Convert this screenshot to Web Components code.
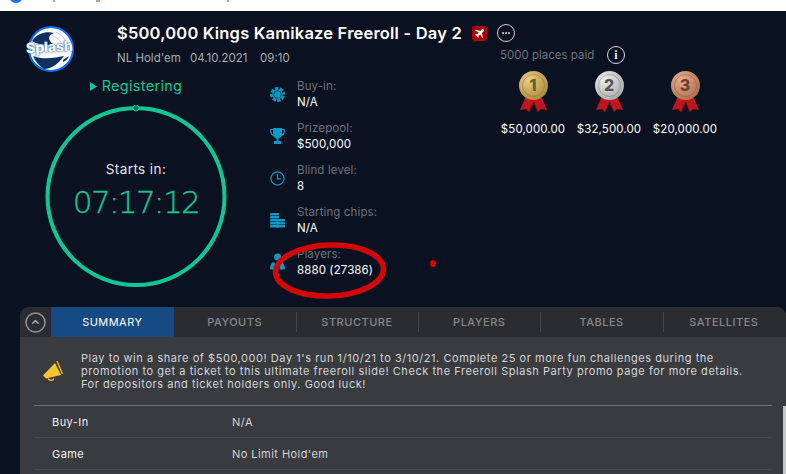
<!DOCTYPE html>
<html>
<head>
<meta charset="utf-8">
<style>
  html, body { margin: 0; padding: 0; height: 100%; overflow: hidden; background: #0a1120; }
  body { font-family: "Inter", "Noto Sans", sans-serif; }
</style>
</head>
<body>
<tourney-page></tourney-page>

<script>
// each block of the page is its own element
const FONT = '"Inter", "Noto Sans", sans-serif';

class TopStrip extends HTMLElement {
  constructor() {
    super();
    this.attachShadow({ mode: 'open' }).innerHTML = `
      <style>
        :host { display: block; height: 11px; background: #fff; overflow: hidden; position: relative; }
        .dot { position: absolute; left: 9px; top: -11px; width: 14px; height: 14px; border-radius: 50%; background: #1a73e8; }
        i { position: absolute; top: 0; height: 2px; width: 2px; background: #b9a79a; }
      </style>
      <div class="dot"></div>
      <i style="left:53px"></i><i style="left:96px;width:4px"></i><i style="left:227px"></i>`;
  }
}

class SplashLogo extends HTMLElement {
  constructor() {
    super();
    this.attachShadow({ mode: 'open' }).innerHTML = `
      <style>
        :host { display: block; width: 50px; height: 50px; position: relative; }
        svg { position: absolute; left: 0; top: 0; }
        span { position: absolute; left: -1px; top: 13px; font: 800 14.300px/18px ${FONT}; color: #fff; letter-spacing: -.3px; text-shadow: 0 0 2px #1d4e9a, 0 0 1px #1d4e9a; transform: rotate(-3deg); }
      </style>
      <svg width="50" height="50" viewBox="0 0 50 50">
        <circle cx="24" cy="24" r="22" fill="#fff" stroke="#0b6ff0" stroke-width="2"/>
        <path d="M5 16C10 8 20 6 27 8C21 10 20 15 27 20C20 20 10 20 5 16Z" fill="#12305f"/>
        <path d="M6 31C16 35 28 33 37 31C32 38 25 44 17 44C12 41 8 36 6 31Z" fill="#12305f"/>
        <path d="M36 35C38 33 41 32 42 31C41 34 39 36 36 37Z" fill="#12305f"/>
        <path d="M28 7C37 10 42 18 38 27M26 11C32 13 36 18 35 24" fill="none" stroke="#c9d2de" stroke-width="1"/>
      </svg>
      <span>Splash</span>`;
  }
}

class TitleBlock extends HTMLElement {
  constructor() {
    super();
    this.attachShadow({ mode: 'open' }).innerHTML = `
      <style>
        :host { display: block; color: #fff; }
        .line { display: flex; align-items: center; height: 24px; }
        h1 { margin: 0; font: 600 16.500px/24px ${FONT}; letter-spacing: .2px; white-space: nowrap; width: 345px; }
        .plane { width: 15px; height: 15px; border-radius: 3px; background: #a90606; margin-left: 10px; display: flex; align-items: center; justify-content: center; }
        .more { width: 16px; height: 16px; border: 1px solid #c9ccd2; border-radius: 50%; margin-left: 10px; display: flex; align-items: center; justify-content: center; gap: 1px; }
        .more i { width: 2px; height: 2px; border-radius: 50%; background: #d8dade; }
        .sub { display: flex; margin-top: 5px; font: 400 11.500px/16px ${FONT}; color: #a9adb5; }
        .sub span:nth-child(1) { width: 73px; }
        .sub span:nth-child(2) { width: 70px; }
      </style>
      <div class="line">
        <h1><slot></slot></h1>
        <div class="plane">
          <svg width="11" height="11" viewBox="0 0 24 24"><path fill="#fff" d="M21 3c-1-1-3-1-4 .3l-3.500 3.500L4 4 2.500 5.500l8 4.500-3.800 3.800-3-.5L2.500 15l4 2.500L9 21.500l1.200-1.200-.5-3 3.800-3.800 4.500 8L19.500 21 17 11l3.700-3.600C22 6.300 22 4 21 3z"/></svg>
        </div>
        <div class="more"><i></i><i></i><i></i></div>
      </div>
      <div class="sub"><span>NL Hold'em</span><span>04.10.2021</span><span>09:10</span></div>`;
  }
}

class CountdownRing extends HTMLElement {
  constructor() {
    super();
    this.attachShadow({ mode: 'open' }).innerHTML = `
      <style>
        :host { display: block; width: 182px; color: #fff; }
        .status { display: flex; align-items: center; justify-content: center; gap: 5px; height: 18px; color: #0ec795; font: 400 14.500px/18px ${FONT}; letter-spacing: .3px; }
        .status svg { display: block; }
        .ring { width: 182px; height: 182px; margin-top: 10px; position: relative; display: flex; flex-direction: column; align-items: center; }
        .ring svg { position: absolute; left: 0; top: 0; }
        .lbl { margin-top: 55px; font: 400 13.500px/18px ${FONT}; letter-spacing: .4px; color: #e4e6ea; position: relative; }
        .time { margin-top: 4px; font: 200 31px/40px "DejaVu Sans", sans-serif; letter-spacing: -1.600px; -webkit-text-stroke: .35px #0ec795; color: #0ec795; position: relative; white-space: nowrap; }
      </style>
      <div class="status">
        <svg width="7" height="9" viewBox="0 0 7 9"><path d="M0 0L7 4.500L0 9Z" fill="#0ec795"/></svg>
        <span>Registering</span>
      </div>
      <div class="ring">
        <svg width="182" height="182" viewBox="0 0 182 182">
          <circle cx="91" cy="91.500" r="88.500" fill="none" stroke="#0ec795" stroke-width="4"/>
          <circle cx="91" cy="3" r="3" fill="#1e6e5c" stroke="#0ec795" stroke-width="1"/>
        </svg>
        <div class="lbl">Starts in:</div>
        <div class="time">07:17:12</div>
      </div>`;
  }
}

class StatRow extends HTMLElement {
  constructor() {
    super();
    this.attachShadow({ mode: 'open' }).innerHTML = `
      <style>
        :host { display: flex; align-items: center; height: 42px; }
        .ic { width: 15px; height: 18px; margin-right: 12px; flex: none; display: flex; align-items: center; justify-content: center; }
        .lb { font: 400 11.500px/15px ${FONT}; letter-spacing: .12px; color: #6f737b; }
        .val { font: 400 11.500px/16px ${FONT}; letter-spacing: .1px; color: #fff; white-space: nowrap; }
      </style>
      <div class="ic"><slot name="icon"></slot></div>
      <div>
        <div class="lb">${this.getAttribute('label')}</div>
        <div class="val">${this.getAttribute('value')}</div>
      </div>`;
  }
}

class MedalItem extends HTMLElement {
  constructor() {
    super();
    const n = this.getAttribute('place');
    const c = {
      1: ['#e8cf88', '#a98436', '#6f5a22'],
      2: ['#efefef', '#a5a5a5', '#555'],
      3: ['#e6ad92', '#ad6c4c', '#6d3f2b'],
    }[n];
    this.attachShadow({ mode: 'open' }).innerHTML = `
      <style>
        :host { display: flex; flex-direction: column; align-items: center; width: 76px; color: #fff; }
        .m { width: 29px; height: 42px; position: relative; }
        .m svg { position: absolute; left: 0; top: 0; }
        .n { position: absolute; left: 0; right: 0; top: 3px; text-align: center; font: 800 16px/22px ${FONT}; color: ${c[2]}; }
        .p { margin-top: 8px; font: 400 11.500px/16px ${FONT}; letter-spacing: .1px; white-space: nowrap; }
      </style>
      <div class="m">
        <svg width="29" height="42" viewBox="0 0 29 42">
          <path d="M7 25L1 39L7 38L10 41L14.500 31L19 41L22 38L28 39L22 25Z" fill="#c0151f"/>
          <path d="M14.500 31L10 41M14.500 31L19 41" stroke="#7c0d14" stroke-width="1"/>
          <defs><radialGradient id="g" cx=".35" cy=".3" r=".8"><stop offset="0" stop-color="${c[0]}"/><stop offset="1" stop-color="${c[1]}"/></radialGradient></defs>
          <circle cx="14.500" cy="14.500" r="14.500" fill="url(#g)"/>
          <circle cx="14.500" cy="14.500" r="11" fill="none" stroke="${c[2]}" stroke-opacity=".35"/>
        </svg>
        <div class="n">${n}</div>
      </div>
      <div class="p"><slot></slot></div>`;
  }
}

class PayoutBox extends HTMLElement {
  constructor() {
    super();
    this.attachShadow({ mode: 'open' }).innerHTML = `
      <style>
        :host { display: block; width: 238px; }
        .head { display: flex; align-items: center; height: 18px; padding-left: 8px; font: 400 11.500px/18px ${FONT}; color: #6f737b; }
        .info { width: 16px; height: 16px; border: 1px solid #d6d8dc; border-radius: 50%; margin-left: 10px; color: #e8e8e8; font: 700 12px/16px "Liberation Serif", serif; text-align: center; }
        .row { display: flex; margin: 7px 0 0 3px; }
      </style>
      <div class="head"><span style="width:97px;white-space:nowrap">5000 places paid</span><div class="info">i</div></div>
      <div class="row"><slot></slot></div>`;
  }
}

class TabBar extends HTMLElement {
  constructor() {
    super();
    const names = ['SUMMARY', 'PAYOUTS', 'STRUCTURE', 'PLAYERS', 'TABLES', 'SATELLITES'];
    this.attachShadow({ mode: 'open' }).innerHTML = `
      <style>
        :host { display: flex; height: 30px; background: #2b2c2f; border-radius: 9px 9px 0 0; overflow: hidden; }
        .tog { width: 31px; flex: none; display: flex; align-items: center; justify-content: center; }
        .tabs { flex: 1; display: grid; grid-template-columns: 122.500px repeat(5, 122.300px); }
        .t { display: flex; align-items: center; justify-content: center; font: 500 11px/14px ${FONT}; letter-spacing: .5px; color: #85888d; position: relative; }
        .t + .t::before { content: ""; position: absolute; left: 0; top: 5px; bottom: 5px; width: 1px; background: #46474a; }
        .t.on { background: #164a82; color: #fff; font-weight: 400; letter-spacing: .45px; }
        .t.on + .t::before { display: none; }
      </style>
      <div class="tog">
        <svg width="21" height="21" viewBox="0 0 21 21"><circle cx="10.500" cy="10.500" r="9.500" fill="none" stroke="#8f9194" stroke-width="1.600"/><path d="M7.300 11.800L10.500 8.700L13.700 11.800" fill="none" stroke="#a5a7aa" stroke-width="1.600"/></svg>
      </div>
      <div class="tabs">${names.map((n, i) => `<div class="t${i ? '' : ' on'}">${n}</div>`).join('')}</div>`;
  }
}

class InfoPanel extends HTMLElement {
  constructor() {
    super();
    this.attachShadow({ mode: 'open' }).innerHTML = `
      <style>
        :host { display: block; margin: 0 0 0 20px; width: 766px; height: 167px; background: #3a3b3f; color: #fff; border-radius: 9px 9px 0 0; position: relative; }
        .promo { display: flex; align-items: center; margin: 0 14px; padding-left: 8px; border-bottom: 1px solid #707174; box-sizing: border-box; width: 738px; height: 69px; }
        .promo svg { flex: none; margin-right: 17px; }
        p { margin: 0; font: 400 11px/13px ${FONT}; letter-spacing: .55px; color: #d3d5d8; white-space: nowrap; }
        .scroll { position: absolute; right: 0; top: 99px; bottom: 0; width: 3px; background: #c6c7c9; }
      </style>
      <tab-bar></tab-bar>
      <div class="promo">
        <svg width="22" height="22" viewBox="0 0 22 22">
          <path d="M1 15.500L13 3L19 15L4 18.500Z" fill="#f6c42d"/>
          <path d="M15 1L20.500 14" stroke="#f6c42d" stroke-width="1.300" fill="none"/>
          <path d="M6 18.500C7 21 11 21 12 18.500" stroke="#f6c42d" stroke-width="1.300" fill="none"/>
        </svg>
        <p>Play to win a share of $500,000! Day 1's run 1/10/21 to 3/10/21. Complete 25 or more fun challenges during the<br>promotion to get a ticket to this ultimate freeroll slide! Check the Freeroll Splash Party promo page for more details.<br>For depositors and ticket holders only. Good luck!</p>
      </div>
      <slot></slot>
      <div class="scroll"></div>`;
  }
}

class DetailRow extends HTMLElement {
  constructor() {
    super();
    this.attachShadow({ mode: 'open' }).innerHTML = `
      <style>
        :host { display: flex; align-items: center; width: 738px; height: 32px; margin-left: 14px; box-sizing: border-box; padding-left: 18px; border-bottom: 1px solid #47484b; font: 400 11px/14px ${FONT}; letter-spacing: .45px; white-space: nowrap; }
        .k { width: 180px; color: #f0f1f2; }
        .v { color: #d3d5d8; }
      </style>
      <div class="k">${this.getAttribute('name')}</div>
      <div class="v"><slot></slot></div>`;
  }
}

class TourneyPage extends HTMLElement {
  constructor() {
    super();
    const ic = '#0b9ac6';
    this.attachShadow({ mode: 'open' }).innerHTML = `
      <style>
        :host { display: block; }
        .head { display: flex; height: 296px; padding-top: 10px; position: relative; box-sizing: border-box; }
        .left { width: 222px; flex: none; padding-left: 45px; box-sizing: border-box; }
        .titles { position: absolute; left: 117px; top: 10px; }
        .stats { width: 227px; flex: none; padding: 52px 0 0 48px; box-sizing: border-box; }
        .pay { padding: 25px 0 0 43px; }
        .ann { position: absolute; overflow: visible; left: 0; top: 0; pointer-events: none; }
      </style>
      <top-strip></top-strip>
      <div class="head">
        <div class="left">
          <splash-logo style="margin:4px 0 0 -18px;height:38px"></splash-logo>
          <countdown-ring style="margin-top:14px"></countdown-ring>
        </div>
        <div class="titles"><title-block>$500,000 Kings Kamikaze Freeroll - Day 2</title-block></div>
        <div class="stats">
          <stat-row label="Buy-in:" value="N/A"><svg slot="icon" width="15" height="15" viewBox="0 0 15 15"><circle cx="7.500" cy="7.500" r="7.500" fill="${ic}"/><circle cx="7.500" cy="7.500" r="6.300" fill="none" stroke="#0a1120" stroke-width="2.400" stroke-dasharray="1.600 3.350"/><circle cx="7.500" cy="7.500" r="3.800" fill="none" stroke="#0a1120" stroke-width=".6"/></svg></stat-row>
          <stat-row label="Prizepool:" value="$500,000"><svg slot="icon" width="15" height="17" viewBox="0 0 15 17"><path d="M3 0H12V6C12 9 10 10 8.500 10.500V13H11V16H4V13H6.500V10.500C5 10 3 9 3 6Z" fill="${ic}"/><path d="M3 1.500H.8V4C.8 6 2 7 4 7.500M12 1.500H14.200V4C14.200 6 13 7 11 7.500" fill="none" stroke="${ic}" stroke-width="1.200"/></svg></stat-row>
          <stat-row label="Blind level:" value="8"><svg slot="icon" width="15" height="15" viewBox="0 0 16 16"><circle cx="8" cy="8" r="7" fill="none" stroke="${ic}" stroke-width="1.300"/><path d="M8 3.500V8.500H11.500" fill="none" stroke="${ic}" stroke-width="1.300"/></svg></stat-row>
          <stat-row label="Starting chips:" value="N/A"><svg slot="icon" width="15" height="15" viewBox="0 0 15 15"><g fill="${ic}"><rect x="0" y="0" width="9" height="2.500" rx="1"/><rect x="0" y="3" width="9" height="2.500" rx="1"/><rect x="0" y="6" width="9" height="2.500" rx="1"/><rect x="0" y="9" width="9" height="2.500" rx="1"/><rect x="0" y="12" width="9" height="2.500" rx="1"/><rect x="6" y="6" width="9" height="2.500" rx="1"/><rect x="6" y="9" width="9" height="2.500" rx="1"/><rect x="6" y="12" width="9" height="2.500" rx="1"/></g></svg></stat-row>
          <stat-row label="Players:" value="8880 (27386)"><svg slot="icon" width="15" height="18" viewBox="0 0 15 18"><circle cx="7.500" cy="4" r="3.500" fill="${ic}"/><path d="M3.500 9C1 10 0 13 0 16C2 17 4 17 5.500 16C6.500 13 5.500 10 3.500 9Z" fill="${ic}"/><path d="M11.500 9C13.500 10 15 13 15 16C13 17 11 17 9.500 16C10 13 10.500 11 11.500 9Z" fill="${ic}"/></svg></stat-row>
        </div>
        <div class="pay">
          <payout-box>
            <medal-item place="1">$50,000.00</medal-item>
            <medal-item place="2">$32,500.00</medal-item>
            <medal-item place="3">$20,000.00</medal-item>
          </payout-box>
        </div>
        <svg class="ann" width="786" height="296" viewBox="0 11 786 296">
          <ellipse cx="329.500" cy="270.500" rx="54" ry="25.500" fill="none" stroke="#d40606" stroke-width="5.500" transform="rotate(-2 329.500 270.500)"/>
          <ellipse cx="433" cy="263.500" rx="3" ry="3.500" fill="#d40606"/>
        </svg>
      </div>
      <info-panel>
        <detail-row name="Buy-In">N/A</detail-row>
        <detail-row name="Game">No Limit Hold'em</detail-row>
      </info-panel>`;
  }
}

customElements.define('top-strip', TopStrip);
customElements.define('splash-logo', SplashLogo);
customElements.define('title-block', TitleBlock);
customElements.define('countdown-ring', CountdownRing);
customElements.define('stat-row', StatRow);
customElements.define('medal-item', MedalItem);
customElements.define('payout-box', PayoutBox);
customElements.define('tab-bar', TabBar);
customElements.define('info-panel', InfoPanel);
customElements.define('detail-row', DetailRow);
customElements.define('tourney-page', TourneyPage);
</script>
</body>
</html>
